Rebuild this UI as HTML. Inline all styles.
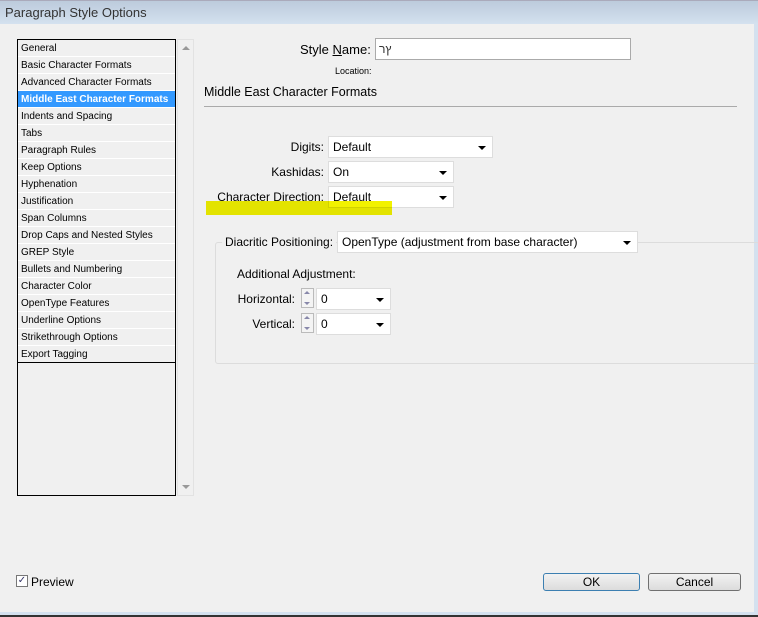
<!DOCTYPE html>
<html><head><meta charset="utf-8"><style>
*{box-sizing:border-box;margin:0;padding:0}
body{width:758px;height:617px;background:#f0f0f0;font-family:"Liberation Sans",sans-serif;font-size:12px;color:#000;position:relative;overflow:hidden}
.a{position:absolute}
.title{left:0;top:0;width:758px;height:24px;background:linear-gradient(#bccbdc,#d4e1ef);font-size:13px;color:#333;padding:4px 5px;border-top:1px solid #aab}
.list{left:17px;top:39px;width:159px;height:457px;border:1px solid #000;background:#f0f0f0}
.it{height:17px;line-height:17px;font-size:10px;padding-left:3px;border-bottom:1px solid #fff;white-space:nowrap;overflow:hidden}
.it.sel{background:#3399ff;color:#fff;font-weight:bold}
.sb{left:177px;top:39px;width:17px;height:457px;border:1px solid #e2e2e2}
.inp{background:#fff;border:1px solid #ccc}
.sel2{background:#fff;border:1px solid #ddd;padding:3px 4px;font-size:12px}
.sel2:after{content:"";position:absolute;right:6px;top:9px;border:4px solid transparent;border-top:4px solid #000;border-bottom:0}
.lbl{text-align:right}
.btn{border:1px solid #707070;border-radius:3px;background:linear-gradient(#f2f2f2,#dcdcdc);text-align:center;line-height:16px;font-size:12px}
.sp{border:1px solid #bbb;background:#f4f4f4}
.sp:before{content:"";position:absolute;left:2px;top:2px;border:3px solid transparent;border-bottom:3px solid #88a;border-top:0}
.sp:after{content:"";position:absolute;left:2px;bottom:2px;border:3px solid transparent;border-top:3px solid #88a;border-bottom:0}
</style></head><body>
<div class="a title">Paragraph Style Options</div>
<div class="a" style="left:754px;top:24px;width:4px;height:590px;background:#d4e1ef"></div>
<div class="a" style="left:0;top:612px;width:758px;height:5px;background:#d4e1ef;border-bottom:2px solid #333"></div>
<div class="a list">
<div class="it">General</div><div class="it">Basic Character Formats</div><div class="it">Advanced Character Formats</div><div class="it sel">Middle East Character Formats</div><div class="it">Indents and Spacing</div><div class="it">Tabs</div><div class="it">Paragraph Rules</div><div class="it">Keep Options</div><div class="it">Hyphenation</div><div class="it">Justification</div><div class="it">Span Columns</div><div class="it">Drop Caps and Nested Styles</div><div class="it">GREP Style</div><div class="it">Bullets and Numbering</div><div class="it">Character Color</div><div class="it">OpenType Features</div><div class="it">Underline Options</div><div class="it">Strikethrough Options</div><div class="it" style="border-bottom:1px solid #000">Export Tagging</div>
</div>
<div class="a sb"><div class="a" style="left:4px;top:6px;border:4px solid transparent;border-bottom:4px solid #999;border-top:0"></div><div class="a" style="left:4px;bottom:6px;border:4px solid transparent;border-top:4px solid #999;border-bottom:0"></div></div>
<div class="a" style="left:300px;top:42px;font-size:13px">Style <u>N</u>ame:</div>
<div class="a inp" style="left:375px;top:38px;width:256px;height:22px;border:1px solid #aaa;padding:3px 3px;color:#333">ץר</div>
<div class="a" style="left:335px;top:66px;font-size:9px">Location:</div>
<div class="a" style="left:204px;top:85px;font-size:12.5px">Middle East Character Formats</div>
<div class="a" style="left:204px;top:106px;width:533px;height:1px;background:#aaa"></div>
<div class="a lbl" style="left:200px;top:140px;width:124px">Digits:</div>
<div class="a sel2" style="left:328px;top:136px;width:165px;height:22px">Default</div>
<div class="a lbl" style="left:200px;top:165px;width:124px">Kashidas:</div>
<div class="a sel2" style="left:328px;top:161px;width:126px;height:22px">On</div>
<div class="a lbl" style="left:200px;top:190px;width:124px">Character Direction:</div>
<div class="a sel2" style="left:328px;top:186px;width:126px;height:22px">Default</div>
<div class="a" style="left:206px;top:201px;width:186px;height:14px;background:#f2f200;mix-blend-mode:multiply"></div>
<div class="a" style="left:215px;top:242px;width:545px;height:122px;border:1px solid #dcdcdc;border-radius:3px"></div>
<div class="a" style="left:222px;top:235px;background:#f0f0f0;padding:0 3px">Diacritic Positioning:</div>
<div class="a sel2" style="left:337px;top:231px;width:301px;height:22px">OpenType (adjustment from base character)</div>
<div class="a" style="left:237px;top:267px">Additional Adjustment:</div>
<div class="a lbl" style="left:220px;top:292px;width:75px">Horizontal:</div>
<div class="a sp" style="left:301px;top:288px;width:13px;height:20px"></div>
<div class="a sel2" style="left:316px;top:288px;width:75px;height:22px">0</div>
<div class="a lbl" style="left:220px;top:317px;width:75px">Vertical:</div>
<div class="a sp" style="left:301px;top:313px;width:13px;height:20px"></div>
<div class="a sel2" style="left:316px;top:313px;width:75px;height:22px">0</div>
<div class="a" style="left:16px;top:575px;width:12px;height:12px;border:1px solid #777;background:#fff;font-size:10px;line-height:10px;text-align:center;color:#336">✓</div>
<div class="a" style="left:31px;top:575px">Preview</div>
<div class="a btn" style="left:543px;top:573px;width:97px;height:18px;border-color:#3c7fb1">OK</div>
<div class="a btn" style="left:648px;top:573px;width:93px;height:18px">Cancel</div>
</body></html>
